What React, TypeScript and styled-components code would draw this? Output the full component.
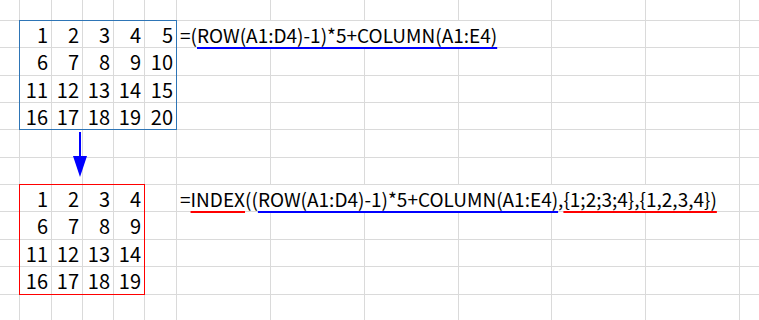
import styled, { createGlobalStyle } from 'styled-components';

const GlobalStyle = createGlobalStyle`
  html, body {
    margin: 0;
    padding: 0;
    background: #fff;
  }
  body {
    font-family: "Noto Sans CJK SC", "Noto Sans", sans-serif;
    color: #000;
  }
`;

// column widths / row heights in px, the gap between them is the gridline
const COLS = [19, 31, 30, 30, 30, 31, 93, 93, 93, 92, 93, 93];
const ROWS = [20, 26, 27, 26, 26, 27, 26, 26, 27, 26, 27];
const NCOLS = COLS.length + 1;
const NROWS = ROWS.length + 1;

const BLUE_FRAME = '#2e75b6';
const RED = '#ff0000';
const BLUE = '#0000ff';

const Sheet = styled.div`
  display: grid;
  grid-template-columns: ${COLS.map((w) => `${w}px`).join(' ')} 1fr;
  grid-template-rows: ${ROWS.map((h) => `${h}px`).join(' ')} 1fr;
  gap: 1px;
  width: 759px;
  height: 320px;
  overflow: hidden;
  background: #dadada;
`;

const Cell = styled.div<{ $row: number; $col: number }>`
  grid-row: ${({ $row }) => $row + 1};
  grid-column: ${({ $col }) => $col + 1};
  background: #fff;
`;

const NumCell = styled(Cell)`
  display: flex;
  align-items: center;
  justify-content: flex-end;
  padding: 1px 3px 0 0;
  font-size: 20px;
  line-height: 20px;
  overflow: hidden;
`;

const FormulaCell = styled.div<{ $row: number; $col: number; $span: number }>`
  grid-row: ${({ $row }) => $row + 1};
  grid-column: ${({ $col, $span }) => `${$col + 1} / span ${$span}`};
  z-index: 1;
  display: flex;
  align-items: center;
  padding: 1px 0 0 3px;
  background: #fff;
  font-size: 19px;
  line-height: 20px;
  white-space: nowrap;
`;

const Mark = styled.span<{ $color: string }>`
  text-decoration: underline;
  text-decoration-color: ${({ $color }) => $color};
  text-decoration-thickness: 2px;
  text-underline-offset: 4px;
  text-decoration-skip-ink: none;
`;

const Frame = styled.div<{ $row: number; $col: number; $rows: number; $cols: number; $color: string }>`
  grid-row: ${({ $row, $rows }) => `${$row + 1} / span ${$rows}`};
  grid-column: ${({ $col, $cols }) => `${$col + 1} / span ${$cols}`};
  z-index: 2;
  outline: 1px solid ${({ $color }) => $color};
  pointer-events: none;
`;

const ArrowLayer = styled.svg`
  grid-row: 6 / span 2;
  grid-column: 3 / span 2;
  z-index: 2;
  width: 100%;
  height: 100%;
  overflow: visible;
  pointer-events: none;
`;

type Block = { row: number; col: number; rows: number; cols: number; color: string };

const TOP: Block = { row: 1, col: 1, rows: 4, cols: 5, color: BLUE_FRAME };
const BOTTOM: Block = { row: 7, col: 1, rows: 4, cols: 4, color: RED };

const FORMULAS = [
  { row: 1, col: 6, span: 4 },
  { row: 7, col: 6, span: 6 },
];

const valueAt = (r: number, c: number) => {
  for (const b of [TOP, BOTTOM]) {
    if (r >= b.row && r < b.row + b.rows && c >= b.col && c < b.col + b.cols) {
      return (r - b.row) * 5 + (c - b.col) + 1;
    }
  }
  return null;
};

const coveredByFormula = (r: number, c: number) =>
  FORMULAS.some((f) => f.row === r && c >= f.col && c < f.col + f.span);

export default function App() {
  const cells = [];
  for (let r = 0; r < NROWS; r++) {
    for (let c = 0; c < NCOLS; c++) {
      if (coveredByFormula(r, c)) continue;
      const v = valueAt(r, c);
      cells.push(
        v === null ? (
          <Cell key={`${r}-${c}`} $row={r} $col={c} />
        ) : (
          <NumCell key={`${r}-${c}`} $row={r} $col={c}>
            {v}
          </NumCell>
        )
      );
    }
  }

  return (
    <>
      <GlobalStyle />
      <Sheet>
        {cells}
        <FormulaCell $row={1} $col={6} $span={4}>
          =(<Mark $color={BLUE}>ROW(A1:D4)-1)*5+COLUMN(A1:E4)</Mark>
        </FormulaCell>
        <FormulaCell $row={7} $col={6} $span={6}>
          =<Mark $color={RED}>INDEX</Mark>((
          <Mark $color={BLUE}>ROW(A1:D4)-1)*5+COLUMN(A1:E4)</Mark>,
          <Mark $color={RED}>{'{1;2;3;4},{1,2,3,4})'}</Mark>
        </FormulaCell>
        {[TOP, BOTTOM].map((b, i) => (
          <Frame key={i} $row={b.row} $col={b.col} $rows={b.rows} $cols={b.cols} $color={b.color} />
        ))}
        <ArrowLayer viewBox="0 0 61 54">
          <rect x={27} y={2} width={2} height={26} fill={BLUE} />
          <polygon points="21,26 35,26 28,47" fill={BLUE} />
        </ArrowLayer>
      </Sheet>
    </>
  );
}
